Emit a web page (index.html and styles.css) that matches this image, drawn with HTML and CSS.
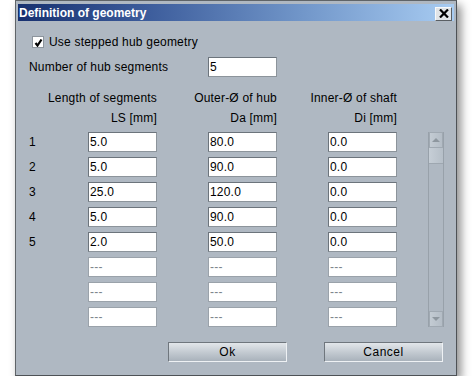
FILE: index.html
```html
<!DOCTYPE html>
<html>
	<head>
		<meta charset="UTF-8">
		<title>Definition of geometry</title>
		<link rel="stylesheet" href="styles.css">
	</head>
	<body>
		<div class="dialog">
			<div class="titlebar">
				<span class="title">Definition of geometry</span>
				<span class="close">
					<svg width="10" height="9" viewBox="0 0 10 9"><path d="M1 0.5 L9 8.5 M9 0.5 L1 8.5" stroke="#000" stroke-width="2.2"/></svg>
				</span>
			</div>
			<div class="content">
				<div class="check-row">
					<span class="checkbox">
						<svg width="9" height="9" viewBox="0 0 9 9"><path d="M1.5 5 L3.5 7.5 L7.5 1.5" fill="none" stroke="#000" stroke-width="2.2"/></svg>
					</span>
					<span>Use stepped hub geometry</span>
				</div>
				<div class="count-row">
					<span class="count-label">Number of hub segments</span>
					<input class="field" type="text" value="5">
				</div>
				<div class="heads">
					<span class="h1">Length of segments</span>
					<span class="h2">Outer-Ø of hub</span>
					<span class="h3">Inner-Ø of shaft</span>
					<span class="h1">LS [mm]</span>
					<span class="h2">Da [mm]</span>
					<span class="h3">Di [mm]</span>
				</div>
				<div class="rows">
					<span class="num">1</span>
					<input class="field c2" type="text" value="5.0">
					<input class="field c4" type="text" value="80.0">
					<input class="field c6" type="text" value="0.0">

					<span class="num">2</span>
					<input class="field c2" type="text" value="5.0">
					<input class="field c4" type="text" value="90.0">
					<input class="field c6" type="text" value="0.0">

					<span class="num">3</span>
					<input class="field c2" type="text" value="25.0">
					<input class="field c4" type="text" value="120.0">
					<input class="field c6" type="text" value="0.0">

					<span class="num">4</span>
					<input class="field c2" type="text" value="5.0">
					<input class="field c4" type="text" value="90.0">
					<input class="field c6" type="text" value="0.0">

					<span class="num">5</span>
					<input class="field c2" type="text" value="2.0">
					<input class="field c4" type="text" value="50.0">
					<input class="field c6" type="text" value="0.0">

					<span class="num"></span>
					<input class="field empty c2" type="text" value="---">
					<input class="field empty c4" type="text" value="---">
					<input class="field empty c6" type="text" value="---">

					<span class="num"></span>
					<input class="field empty c2" type="text" value="---">
					<input class="field empty c4" type="text" value="---">
					<input class="field empty c6" type="text" value="---">

					<span class="num"></span>
					<input class="field empty c2" type="text" value="---">
					<input class="field empty c4" type="text" value="---">
					<input class="field empty c6" type="text" value="---">

					<div class="scroll">
						<div class="sbtn"><span class="arrow-up"></span></div>
						<div class="thumb"></div>
						<div class="track"></div>
						<div class="sbtn"><span class="arrow-down"></span></div>
					</div>
				</div>
				<div class="buttons">
					<button class="btn">Ok</button>
					<button class="btn">Cancel</button>
				</div>
			</div>
		</div>
	</body>
</html>
```

FILE: styles.css
```css
*{
	margin:0px;padding:0px;box-sizing:border-box;
}
body{
	background:#fff;
	font-family:"Liberation Sans",Arial,sans-serif;
	font-size:12px;
	letter-spacing:.2px;
	color:#000;
}
.dialog{
	width:442px;
	height:376px;
	margin-left:15px;
	border:1px solid #5f6468;
	border-right-color:#4e5256;
	border-bottom-color:#4e5256;
	background:#afb8c2;
	padding:3px 2px 0 2px;
	box-shadow:4px 5px 9px rgba(0,0,0,.45);
}
.titlebar{
	height:17px;
	display:flex;
	align-items:center;
	justify-content:space-between;
	padding:0 2px 0 1px;
	background:linear-gradient(to right,#17306f 0%,#3d5d9c 30%,#7196c9 65%,#a8ccf2 100%);
}
.title{
	color:#fff;
	font-weight:bold;
	font-size:12px;
	letter-spacing:0;
}
.close{
	width:17px;
	height:14px;
	margin-top:2px;
	background:#e1e4e7;
	border:1px solid #f8f9fa;
	border-right-color:#5a5f64;
	border-bottom-color:#5a5f64;
	display:flex;
	align-items:center;
	justify-content:center;
}
.content{
	padding-left:11px;
}
.check-row{
	height:20px;
	margin-top:11px;
	display:flex;
	align-items:center;
	padding-left:3px;
	gap:5px;
}
.checkbox{
	width:12px;
	height:12px;
	background:#fff;
	border:1px solid #8d959d;
	display:flex;
	align-items:center;
	justify-content:center;
}
.count-row{
	margin-top:5px;
	height:20px;
	display:flex;
	align-items:center;
}
.count-label{
	width:179px;
}
.field{
	width:69px;
	height:20px;
	border:1px solid #8c949b;
	border-top-color:#6c747c;
	border-left-color:#6c747c;
	background:#fff;
	font-family:"Liberation Sans",Arial,sans-serif;
	font-size:12px;
	letter-spacing:.2px;
	color:#000;
	padding:0 1px;
	outline:none;
}
.field.empty{
	border-color:#9aa2aa;
	color:#7e858c;
}
.heads,.rows{
	display:grid;
	grid-template-columns:59px 69px 51px 69px 51px 69px 31px 16px;
}
.heads{
	margin-top:11px;
	grid-auto-rows:20px;
	line-height:20px;
}
.heads span{
	text-align:right;
	white-space:nowrap;
}
.h1{grid-column:1 / 3;}
.h2{grid-column:3 / 5;}
.h3{grid-column:5 / 7;}
.rows{
	margin-top:4px;
	grid-auto-rows:20px;
	row-gap:5px;
}
.num{
	grid-column:1;
	line-height:20px;
}
.c2{grid-column:2;}
.c4{grid-column:4;}
.c6{grid-column:6;}
.scroll{
	grid-column:8;
	grid-row:1 / 9;
	display:flex;
	flex-direction:column;
	border-left:1px solid #98a1aa;
	border-right:1px solid #98a1aa;
}
.sbtn{
	height:16px;
	background:linear-gradient(to right,#c3cbd3,#b4bdc6);
	border:1px solid #a0a9b2;
	display:flex;
	align-items:center;
	justify-content:center;
}
.thumb{
	height:16px;
	background:linear-gradient(to right,#c6ced6,#b6bfc8);
	border-bottom:1px solid #9ea7b0;
}
.track{
	flex:1;
}
.arrow-up{
	border-left:4px solid transparent;
	border-right:4px solid transparent;
	border-bottom:4px solid #8e979f;
}
.arrow-down{
	border-left:4px solid transparent;
	border-right:4px solid transparent;
	border-top:4px solid #8e979f;
}
.buttons{
	margin-top:15px;
	display:flex;
	gap:37px;
	padding-left:139px;
}
.btn{
	width:119px;
	height:20px;
	font-family:"Liberation Sans",Arial,sans-serif;
	font-size:12px;
	color:#000;
	background:linear-gradient(#e2e6ea,#c4cbd2 50%,#a9b2bb);
	border:1px solid #eef1f4;
	border-top-color:#6f767d;
	border-left-color:#6f767d;
	letter-spacing:.5px;
}
```
